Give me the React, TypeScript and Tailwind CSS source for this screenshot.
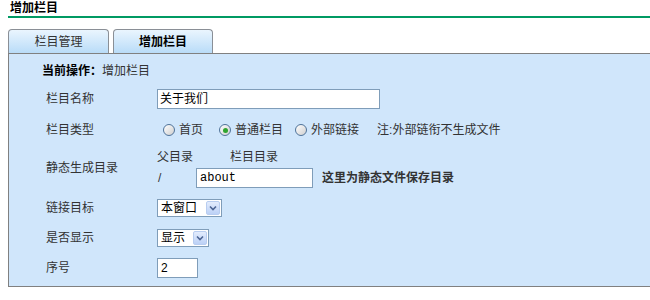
import React from 'react';

const FONT = "font-['Liberation_Sans','Noto_Sans_CJK_SC',sans-serif]";

const Radio: React.FC<{ checked?: boolean }> = ({ checked }) => (
  <span className="flex h-[12px] w-[12px] shrink-0 items-center justify-center rounded-full border border-[#4f7399] bg-gradient-to-br from-white to-[#cfcfcf]">
    {checked && <span className="h-[5px] w-[5px] rounded-full bg-[#2fa52f]" />}
  </span>
);

const FakeSelect: React.FC<{ value: string; width: string }> = ({ value, width }) => (
  <div className={`flex h-[18px] items-center justify-between border border-[#7f9db9] bg-white pl-[3px] pr-[1px] ${width}`}>
    <span className="text-[12px] leading-none text-black">{value}</span>
    <span className="flex h-[14px] w-[14px] items-center justify-center rounded-[2px] border border-[#b8cdf0] bg-gradient-to-b from-[#e3ecfd] to-[#bcd1f6]">
      <svg width="8" height="6" viewBox="0 0 8 6">
        <path d="M1 1.5 L4 4.5 L7 1.5" fill="none" stroke="#4d6594" strokeWidth="1.6" />
      </svg>
    </span>
  </div>
);

const Row: React.FC<{ label: string; className?: string; children: React.ReactNode }> = ({ label, className = '', children }) => (
  <div className={`flex items-center ${className}`}>
    <div className="w-[148px] shrink-0 pl-[37px] text-[12px] text-[#333]">{label}</div>
    <div className="flex items-center">{children}</div>
  </div>
);

export default function App() {
  return (
    <div className={`h-[300px] w-[650px] overflow-hidden bg-white ${FONT}`}>
      {/* page title */}
      <div className="ml-[8px] flex h-[18px] items-center border-b-2 border-[#009a63] pb-[1px] pl-[2px] text-[12px] font-bold leading-none text-black">
        增加栏目
      </div>

      {/* tabs */}
      <div className="ml-[8px] mt-[11px] flex h-[24px] items-end gap-[4px]">
        <div className="flex h-[24px] w-[101px] items-center justify-center rounded-t-[4px] border border-b-0 border-[#8a8f96] bg-gradient-to-b from-[#eaf5fe] to-[#b9dcf8] text-[12px] text-[#333]">
          栏目管理
        </div>
        <div className="flex h-[24px] w-[100px] items-center justify-center rounded-t-[4px] border border-b-0 border-[#8a8f96] bg-gradient-to-b from-[#eaf5fe] to-[#b9dcf8] text-[12px] font-bold text-black">
          增加栏目
        </div>
      </div>

      {/* panel */}
      <div className="ml-[8px] border-y border-l border-[#808080] bg-[#d0e6fb] pb-[3px] pt-[5px]">
        <div className="flex h-[24px] items-center pl-[33px] text-[12px] text-[#333]">
          <span className="font-bold text-black">当前操作：</span>
          <span>增加栏目</span>
        </div>

        <Row label="栏目名称" className="h-[32px]">
          <div className="flex h-[20px] w-[223px] items-center border border-[#7f9db9] bg-white px-[2px] text-[12px] text-black">
            关于我们
          </div>
        </Row>

        <Row label="栏目类型" className="h-[30px]">
          <div className="ml-[6px] flex items-center text-[12px] text-[#333]">
            <Radio />
            <span className="ml-[4px]">首页</span>
            <span className="ml-[16px]"><Radio checked /></span>
            <span className="ml-[4px]">普通栏目</span>
            <span className="ml-[12px]"><Radio /></span>
            <span className="ml-[4px]">外部链接</span>
            <span className="ml-[18px]">注:外部链衔不生成文件</span>
          </div>
        </Row>

        <Row label="静态生成目录" className="mt-[3px] h-[40px]">
          <div className="flex flex-col text-[12px] text-[#333]">
            <div className="flex h-[18px] items-center">
              <span className="w-[73px]">父目录</span>
              <span>栏目目录</span>
            </div>
            <div className="mt-[2px] flex items-center">
              <span className="w-[39px] pl-[1px]">/</span>
              <div className="flex h-[20px] w-[117px] items-center border border-[#7f9db9] bg-white px-[3px] font-['Liberation_Mono',monospace] text-[12px] text-black">
                about
              </div>
              <span className="ml-[9px] font-bold text-[#333]">这里为静态文件保存目录</span>
            </div>
          </div>
        </Row>

        <Row label="链接目标" className="mt-[5px] h-[30px]">
          <FakeSelect value="本窗口" width="w-[65px]" />
        </Row>

        <Row label="是否显示" className="h-[30px]">
          <FakeSelect value="显示" width="w-[52px]" />
        </Row>

        <Row label="序号" className="h-[30px]">
          <div className="flex h-[20px] w-[41px] items-center border border-[#7f9db9] bg-white px-[3px] text-[12px] text-black">
            2
          </div>
        </Row>
      </div>
    </div>
  );
}
